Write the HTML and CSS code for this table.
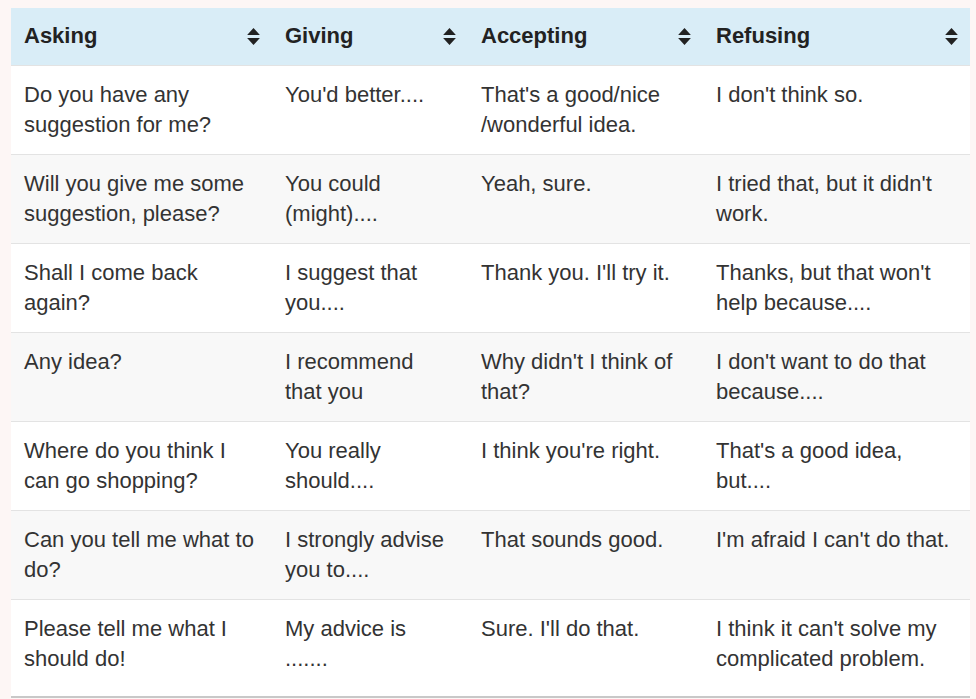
FILE: index.html
```html
<!DOCTYPE html>
<html>
<head>
<meta charset="utf-8">
<link rel="stylesheet" href="styles.css">
</head>
<body>
<table class="expr">
  <colgroup>
    <col class="c1"><col class="c2"><col class="c3"><col class="c4">
  </colgroup>
  <thead>
    <tr>
      <th><div class="th-in"><span>Asking</span><svg class="sort" viewBox="0 0 12 16"><path d="M6 0 L12 6.5 L0 6.5 Z M6 16 L12 9.5 L0 9.5 Z"/></svg></div></th>
      <th><div class="th-in"><span>Giving</span><svg class="sort" viewBox="0 0 12 16"><path d="M6 0 L12 6.5 L0 6.5 Z M6 16 L12 9.5 L0 9.5 Z"/></svg></div></th>
      <th><div class="th-in"><span>Accepting</span><svg class="sort" viewBox="0 0 12 16"><path d="M6 0 L12 6.5 L0 6.5 Z M6 16 L12 9.5 L0 9.5 Z"/></svg></div></th>
      <th><div class="th-in"><span>Refusing</span><svg class="sort" viewBox="0 0 12 16"><path d="M6 0 L12 6.5 L0 6.5 Z M6 16 L12 9.5 L0 9.5 Z"/></svg></div></th>
    </tr>
  </thead>
  <tbody>
    <tr>
      <td>Do you have any<br>suggestion for me?</td>
      <td>You'd better....</td>
      <td>That's a good/nice<br>/wonderful idea.</td>
      <td>I don't think so.</td>
    </tr>
    <tr>
      <td>Will you give me some<br>suggestion, please?</td>
      <td>You could<br>(might)....</td>
      <td>Yeah, sure.</td>
      <td>I tried that, but it didn't<br>work.</td>
    </tr>
    <tr>
      <td>Shall I come back<br>again?</td>
      <td>I suggest that<br>you....</td>
      <td>Thank you. I'll try it.</td>
      <td>Thanks, but that won't<br>help because....</td>
    </tr>
    <tr>
      <td>Any idea?</td>
      <td>I recommend<br>that you</td>
      <td>Why didn't I think of<br>that?</td>
      <td>I don't want to do that<br>because....</td>
    </tr>
    <tr>
      <td>Where do you think I<br>can go shopping?</td>
      <td>You really<br>should....</td>
      <td>I think you're right.</td>
      <td>That's a good idea,<br>but....</td>
    </tr>
    <tr>
      <td>Can you tell me what to<br>do?</td>
      <td>I strongly advise<br>you to....</td>
      <td>That sounds good.</td>
      <td>I'm afraid I can't do that.</td>
    </tr>
    <tr>
      <td>Please tell me what I<br>should do!</td>
      <td>My advice is<br>.......</td>
      <td>Sure. I'll do that.</td>
      <td>I think it can't solve my<br>complicated problem.</td>
    </tr>
  </tbody>
</table>
</body>
</html>
```
FILE: styles.css
```css
html, body {
  margin: 0;
  padding: 0;
  background: #fdf6f5;
}
body {
  padding: 8px 6px 0 11px;
  font-family: "Liberation Sans", Arial, sans-serif;
}
.expr {
  border-collapse: collapse;
  table-layout: fixed;
  width: 959px;
  background: #ffffff;
}
.c1 { width: 261px; }
.c2 { width: 196px; }
.c3 { width: 235px; }
.c4 { width: 267px; }
.expr th {
  background: #d9edf7;
  color: #222;
  font-size: 22px;
  font-weight: bold;
  text-align: left;
  line-height: 30px;
  padding: 13px 12px 14px 13px;
}
.th-in {
  display: flex;
  align-items: center;
  justify-content: space-between;
}
.sort {
  width: 13px;
  height: 17px;
  fill: #222;
  flex: none;
}
.expr td {
  font-size: 22px;
  line-height: 30px;
  color: #333;
  vertical-align: top;
  padding: 14px 10px 14px 13px;
  border-top: 1px solid #e3e3e3;
  height: 60px;
  white-space: nowrap;
}
.expr tbody tr:nth-child(even) td {
  background: #f8f8f8;
}
.expr tbody tr:last-child td {
  border-bottom: 2px solid #c8c8c8;
  height: 68px;
}
```
